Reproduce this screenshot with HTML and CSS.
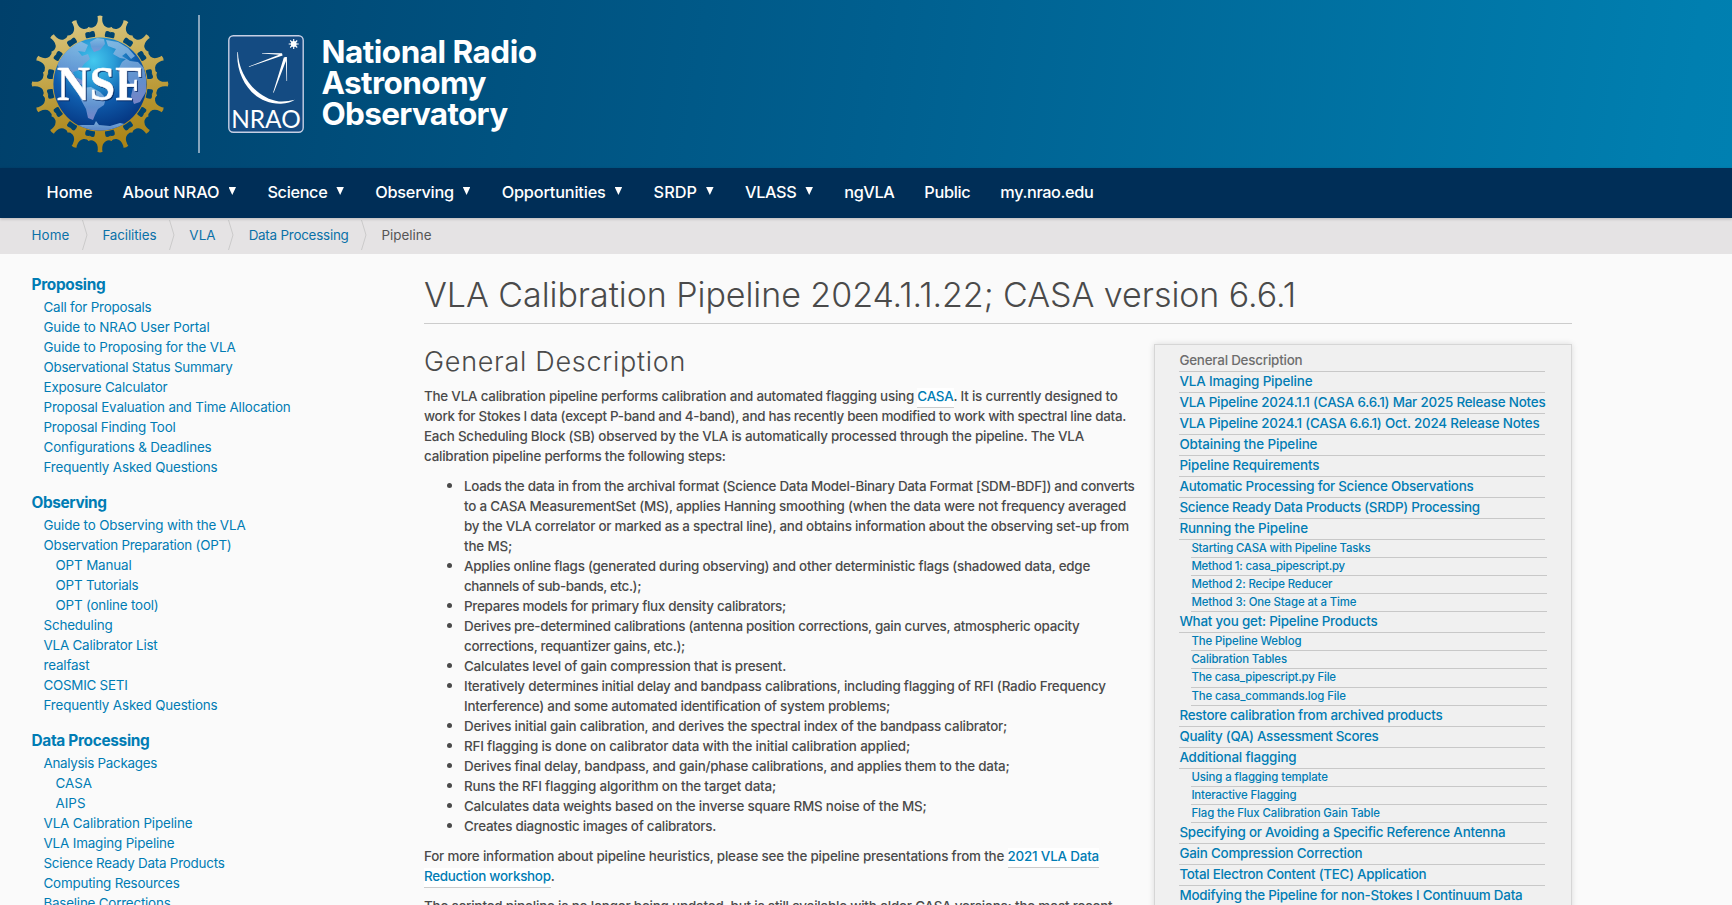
FILE: index.html
```html
<!DOCTYPE html>
<html lang="en">
<head>
<meta charset="utf-8">
<title>VLA Calibration Pipeline</title>
<link rel="stylesheet" href="styles.css">
</head>
<body>
<header class="masthead">
  <svg class="nsf" width="140" height="140" viewBox="-70 -70 140 140">
    <defs>
      <linearGradient id="gold" x1="0" y1="0" x2="0.15" y2="1">
        <stop offset="0" stop-color="#dccb8c"/><stop offset=".35" stop-color="#ccb25c"/><stop offset=".7" stop-color="#b79530"/><stop offset="1" stop-color="#ab8416"/>
      </linearGradient>
      <radialGradient id="sea" cx=".43" cy=".25" r=".72">
        <stop offset="0" stop-color="#44c8ee"/><stop offset=".3" stop-color="#2b9ed8"/><stop offset=".62" stop-color="#0f5cac"/><stop offset="1" stop-color="#063a86"/>
      </radialGradient>
      <linearGradient id="land" x1="0" y1="0" x2="0" y2="1">
        <stop offset="0" stop-color="#8fc0e6"/><stop offset=".6" stop-color="#6f9bd6"/><stop offset="1" stop-color="#8b8fd0"/>
      </linearGradient>
      <clipPath id="disc"><circle r="46.6"/></clipPath>
      <path id="tooth" d="M-2.600-67.800Q0-69 2.600-67.800L2.200-66Q1.800-59.500 5.800-57.200Q8.600-55.600 11.800-57L10.400-51.800Q6.600-54 5.600-52.200Q4.400-50 5.200-45.500L-5.200-45.500Q-4.400-50-5.600-52.200Q-6.600-54-10.400-51.800L-11.800-57Q-8.600-55.600-5.800-57.200Q-1.800-59.500-2.200-66Z"/>
      <mask id="gear" maskUnits="userSpaceOnUse" x="-70" y="-70" width="140" height="140">
        <g fill="#fff">
          <use href="#tooth"/><use href="#tooth" transform="rotate(22.5)"/><use href="#tooth" transform="rotate(45)"/><use href="#tooth" transform="rotate(67.5)"/>
          <use href="#tooth" transform="rotate(90)"/><use href="#tooth" transform="rotate(112.5)"/><use href="#tooth" transform="rotate(135)"/><use href="#tooth" transform="rotate(157.5)"/>
          <use href="#tooth" transform="rotate(180)"/><use href="#tooth" transform="rotate(202.5)"/><use href="#tooth" transform="rotate(225)"/><use href="#tooth" transform="rotate(247.5)"/>
          <use href="#tooth" transform="rotate(270)"/><use href="#tooth" transform="rotate(292.5)"/><use href="#tooth" transform="rotate(315)"/><use href="#tooth" transform="rotate(337.5)"/>
          <circle r="47.6"/>
        </g>
      </mask>
    </defs>
    <rect x="-70" y="-70" width="140" height="140" fill="url(#gold)" mask="url(#gear)"/>
    <circle r="46.6" fill="url(#sea)"/>
    <g clip-path="url(#disc)" fill="url(#land)" opacity=".85">
      <path d="M-44-22L-33-38L-20-43L-12-39L-15-32L-22-33L-18-28L-12-30L-10-25L-16-20L-20-14L-27-12L-25-7L-18-4L-14 2L-20 0L-29-6L-36-6L-40-14Z"/>
      <path d="M-10-42L-3-46L4-45L5-40L0-34L-6-32L-9-37Z"/>
      <path d="M6-44L18-42L28-36L35-28L31-25L26-31L22-28L30-23L38-22L44-16L46-6L46 8L40 18L34 20L31 12L33 4L28-4L20-6L18-14L22-22L26-25L20-26L13-30L16-35L8-38Z"/>
      <path d="M-19 4L-9 3L0 8L6 14L4 21L-2 25L-5 31L-7 36L-12 34L-14 25L-19 16L-22 9Z"/>
      <path d="M-34 43L-18 41L-6 41L-4 37L-1 41L10 42L20 39L34 42L20 50L-20 50Z"/>
    </g>
    <text x="-43" y="15.5" class="nsf-word" textLength="86" lengthAdjust="spacingAndGlyphs">NSF</text>
  </svg>
  <span class="rule"></span>
  <svg class="nrao" width="76" height="98" viewBox="228 35 76 98">
    <rect x="228.8" y="35.8" width="74.4" height="96.4" rx="4.5" fill="#144b82" stroke="#c6cfe4" stroke-width="1.4"/>
    <path fill="#fff" d="M237.4 52C235.5 76 252 104.5 281 103.8Q290 103.2 294.8 99.8Q287 102 279 101.5C257 98.5 238.5 76 237.9 52Z"/>
    <path fill="#fff" d="M262 52.9L282 53.2L282.6 55.4L249 67L248.8 66.5L279 54.7L262 53.5ZM285.5 57L286.9 57L287.1 81L286.5 81L285.9 61L273.7 92.7L273.1 92.5L283.8 57.5Z"/>
    <path stroke="#fff" stroke-width="1.1" d="M293.7 39V49M288.7 44H298.7M290.2 40.5L297.2 47.5M297.2 40.5L290.2 47.5"/>
    <circle cx="293.7" cy="44" r="2.9" fill="#fff"/>
    <text x="231.2" y="128" class="nrao-word" textLength="69.5" lengthAdjust="spacingAndGlyphs">NRAO</text>
  </svg>
  <div class="wordmark"><span data-w="215">National Radio</span><span data-w="164.5">Astronomy</span><span data-w="186">Observatory</span></div>
</header>
<nav class="mainnav">
  <a><span data-w="46">Home</span></a>
  <a class="drop"><span data-w="97">About NRAO</span></a>
  <a class="drop"><span data-w="60">Science</span></a>
  <a class="drop"><span data-w="78.5">Observing</span></a>
  <a class="drop"><span data-w="104">Opportunities</span></a>
  <a class="drop"><span data-w="43.5">SRDP</span></a>
  <a class="drop"><span data-w="51.5">VLASS</span></a>
  <a><span data-w="50">ngVLA</span></a>
  <a><span data-w="46">Public</span></a>
  <a><span data-w="93">my.nrao.edu</span></a>
</nav>
<div class="crumbs">
  <a><span data-w="38">Home</span></a><svg width="6" height="30"><path d="M.5 0L5 15L.5 30"/></svg>
  <a><span data-w="54">Facilities</span></a><svg width="6" height="30"><path d="M.5 0L5 15L.5 30"/></svg>
  <a><span data-w="26.5">VLA</span></a><svg width="6" height="30"><path d="M.5 0L5 15L.5 30"/></svg>
  <a><span data-w="100">Data Processing</span></a><svg width="6" height="30"><path d="M.5 0L5 15L.5 30"/></svg>
  <b><span data-w="50">Pipeline</span></b>
</div>
<div class="page">
  <aside class="side">
    <h4><span data-w="74">Proposing</span></h4>
    <ul>
      <li><span data-w="108">Call for Proposals</span></li>
      <li><span data-w="166">Guide to NRAO User Portal</span></li>
      <li><span data-w="192">Guide to Proposing for the VLA</span></li>
      <li><span data-w="189">Observational Status Summary</span></li>
      <li><span data-w="124">Exposure Calculator</span></li>
      <li><span data-w="247">Proposal Evaluation and Time Allocation</span></li>
      <li><span data-w="132">Proposal Finding Tool</span></li>
      <li><span data-w="168">Configurations &amp; Deadlines</span></li>
      <li><span data-w="174">Frequently Asked Questions</span></li>
    </ul>
    <h4><span data-w="75">Observing</span></h4>
    <ul>
      <li><span data-w="202">Guide to Observing with the VLA</span></li>
      <li><span data-w="188">Observation Preparation (OPT)</span></li>
      <li class="deep"><span data-w="76">OPT Manual</span></li>
      <li class="deep"><span data-w="83">OPT Tutorials</span></li>
      <li class="deep"><span data-w="103">OPT (online tool)</span></li>
      <li><span data-w="69">Scheduling</span></li>
      <li><span data-w="114">VLA Calibrator List</span></li>
      <li><span data-w="46">realfast</span></li>
      <li><span data-w="84">COSMIC SETI</span></li>
      <li><span data-w="174">Frequently Asked Questions</span></li>
    </ul>
    <h4><span data-w="118">Data Processing</span></h4>
    <ul>
      <li><span data-w="113.5">Analysis Packages</span></li>
      <li class="deep"><span data-w="36.5">CASA</span></li>
      <li class="deep"><span data-w="30">AIPS</span></li>
      <li><span data-w="149">VLA Calibration Pipeline</span></li>
      <li><span data-w="131">VLA Imaging Pipeline</span></li>
      <li><span data-w="181">Science Ready Data Products</span></li>
      <li><span data-w="136">Computing Resources</span></li>
      <li><span data-w="127">Baseline Corrections</span></li>
    </ul>
  </aside>
  <main class="main">
    <h1><span data-w="872">VLA Calibration Pipeline 2024.1.1.22; CASA version 6.6.1</span></h1>
    <div class="cols">
      <article class="copy">
        <h2><span data-w="262">General Description</span></h2>
        <p><span data-w="693.5">The VLA calibration pipeline performs calibration and automated flagging using <a>CASA</a>. It is currently designed to</span><br>
        <span data-w="702">work for Stokes I data (except P-band and 4-band), and has recently been modified to work with spectral line data.</span><br>
        <span data-w="660">Each Scheduling Block (SB) observed by the VLA is automatically processed through the pipeline. The VLA</span><br>
        <span data-w="301.5">calibration pipeline performs the following steps:</span></p>
        <ul>
          <li><span data-w="670.5">Loads the data in from the archival format (Science Data Model-Binary Data Format [SDM-BDF]) and converts</span><br>
          <span data-w="662">to a CASA MeasurementSet (MS), applies Hanning smoothing (when the data were not frequency averaged</span><br>
          <span data-w="665">by the VLA correlator or marked as a spectral line), and obtains information about the observing set-up from</span><br>
          <span data-w="48">the MS;</span></li>
          <li><span data-w="626">Applies online flags (generated during observing) and other deterministic flags (shadowed data, edge</span><br>
          <span data-w="177">channels of sub-bands, etc.);</span></li>
          <li><span data-w="322">Prepares models for primary flux density calibrators;</span></li>
          <li><span data-w="615.5">Derives pre-determined calibrations (antenna position corrections, gain curves, atmospheric opacity</span><br>
          <span data-w="221">corrections, requantizer gains, etc.);</span></li>
          <li><span data-w="322">Calculates level of gain compression that is present.</span></li>
          <li><span data-w="641.5">Iteratively determines initial delay and bandpass calibrations, including flagging of RFI (Radio Frequency</span><br>
          <span data-w="426">Interference) and some automated identification of system problems;</span></li>
          <li><span data-w="543">Derives initial gain calibration, and derives the spectral index of the bandpass calibrator;</span></li>
          <li><span data-w="446">RFI flagging is done on calibrator data with the initial calibration applied;</span></li>
          <li><span data-w="545.5">Derives final delay, bandpass, and gain/phase calibrations, and applies them to the data;</span></li>
          <li><span data-w="312">Runs the RFI flagging algorithm on the target data;</span></li>
          <li><span data-w="462.5">Calculates data weights based on the inverse square RMS noise of the MS;</span></li>
          <li><span data-w="252">Creates diagnostic images of calibrators.</span></li>
        </ul>
        <p><span data-w="675">For more information about pipeline heuristics, please see the pipeline presentations from the <a>2021 VLA Data</a></span><br>
        <span data-w="130.5"><a>Reduction workshop</a>.</span></p>
        <p><span data-w="688.5">The scripted pipeline is no longer being updated, but is still available with older CASA versions; the most recent</span></p>
      </article>
      <div class="toc">
        <ul>
          <li class="here"><span data-w="123">General Description</span></li>
          <li><span data-w="133">VLA Imaging Pipeline</span></li>
          <li><span data-w="366">VLA Pipeline 2024.1.1 (CASA 6.6.1) Mar 2025 Release Notes</span></li>
          <li><span data-w="360">VLA Pipeline 2024.1 (CASA 6.6.1) Oct. 2024 Release Notes</span></li>
          <li><span data-w="138">Obtaining the Pipeline</span></li>
          <li><span data-w="140">Pipeline Requirements</span></li>
          <li><span data-w="294">Automatic Processing for Science Observations</span></li>
          <li><span data-w="300.5">Science Ready Data Products (SRDP) Processing</span></li>
          <li><span data-w="128.5">Running the Pipeline</span></li>
          <li class="sub"><span data-w="179">Starting CASA with Pipeline Tasks</span></li>
          <li class="sub"><span data-w="153.5">Method 1: casa_pipescript.py</span></li>
          <li class="sub"><span data-w="141">Method 2: Recipe Reducer</span></li>
          <li class="sub"><span data-w="165">Method 3: One Stage at a Time</span></li>
          <li><span data-w="198">What you get: Pipeline Products</span></li>
          <li class="sub"><span data-w="110">The Pipeline Weblog</span></li>
          <li class="sub"><span data-w="95.5">Calibration Tables</span></li>
          <li class="sub"><span data-w="144.5">The casa_pipescript.py File</span></li>
          <li class="sub"><span data-w="154.5">The casa_commands.log File</span></li>
          <li><span data-w="263">Restore calibration from archived products</span></li>
          <li><span data-w="199">Quality (QA) Assessment Scores</span></li>
          <li><span data-w="117">Additional flagging</span></li>
          <li class="sub"><span data-w="136.5">Using a flagging template</span></li>
          <li class="sub"><span data-w="105">Interactive Flagging</span></li>
          <li class="sub"><span data-w="188.5">Flag the Flux Calibration Gain Table</span></li>
          <li><span data-w="326">Specifying or Avoiding a Specific Reference Antenna</span></li>
          <li><span data-w="183">Gain Compression Correction</span></li>
          <li><span data-w="247">Total Electron Content (TEC) Application</span></li>
          <li><span data-w="343">Modifying the Pipeline for non-Stokes I Continuum Data</span></li>
        </ul>
      </div>
    </div>
  </main>
</div>
<script src="tracking.js"></script>
</body>
</html>
```

FILE: styles.css
```css
* { box-sizing: border-box; }
html, body { height: 100%; overflow: hidden; }
body {
  margin: 0;
  background: #fafafa;
  color: #4a4a4a;
  font: 500 13.4px/20px Inter, Roboto, sans-serif;
}
ul { list-style: none; margin: 0; padding: 0; }
h1, h2, h4, p { margin: 0; }
[data-w] { display: inline-block; white-space: nowrap; }

.masthead {
  display: flex;
  align-items: flex-start;
  height: 168px;
  padding-left: 30px;
  background: linear-gradient(98deg, #00406b 0%, #005f8f 50%, #007fb0 97%, #0080b1 100%);
}
.nsf { margin-top: 14px; }
.nsf-word {
  fill: #fff;
  stroke: #fff;
  stroke-width: .5px;
  font: 700 47.5px "Liberation Serif", serif;
  filter: drop-shadow(1px 1.5px .6px rgba(8, 36, 90, .8));
}
.nrao-word { fill: #fff; font: 400 25.5px Lato, sans-serif; }
.rule { width: 2px; height: 138px; margin: 15px 0 0 28px; background: #86a5bd; }
.nrao { margin: 35px 0 0 28px; }
.wordmark {
  display: flex;
  flex-direction: column;
  align-items: flex-start;
  margin: 37px 0 0 17.5px;
  color: #fff;
  font-size: 31.5px;
  font-weight: 700;
  line-height: 30.8px;
}

.mainnav {
  position: relative;
  display: flex;
  height: 50px;
  padding: 14px 0 0 31.5px;
  background: #002e57;
  box-shadow: 0 1px 3px rgba(0, 0, 0, .2);
  color: #fff;
  font-size: 16.3px;
}
.mainnav a { padding: 0 15px; }
.drop { display: flex; }
.drop::after {
  content: "";
  width: 7.5px;
  height: 8px;
  margin: 5px 1.4px 0 9px;
  background: #fff;
  clip-path: polygon(0 0, 100% 0, 50% 100%);
}

.crumbs {
  display: flex;
  height: 36px;
  padding: 2px 0 0 31.5px;
  background: #e5e3e4;
  color: #0a71a8;
  font-weight: 400;
  line-height: 30px;
}
.crumbs svg { margin: 0 14.2px 0 12.7px; fill: none; stroke: #cbcaca; }
.crumbs b { color: #555; font-weight: 400; }

.page { display: flex; }
.side { width: 424px; padding: 21px 0 0 31.5px; color: #007cb4; font-weight: 400; }
.side h4 { height: 22px; font-size: 15.4px; font-weight: 700; }
.side ul { margin-bottom: 16px; padding-left: 12px; }
.side .deep { padding-left: 12px; }

.main { width: 1148px; padding-top: 21px; }
.main h1 {
  height: 49px;
  border-bottom: 1px solid #ccc;
  font-size: 34px;
  font-weight: 300;
  line-height: 40px;
}
.cols { display: flex; justify-content: space-between; padding-top: 20px; }
.copy { width: 712px; padding-top: 2px; }
.copy h2 { height: 40px; font-size: 27px; font-weight: 300; line-height: 32px; }
.copy p { margin-bottom: 10px; }
.copy a { padding-bottom: 3px; border-bottom: 1px solid #ccc; background: #fff; color: #007cb4; }
.copy ul { margin-bottom: 10px; padding-left: 40px; }
.copy li { display: flow-root; position: relative; }
.copy li::before {
  content: "";
  position: absolute;
  left: -17px;
  top: 7px;
  width: 5px;
  height: 5px;
  border-radius: 50%;
  background: #4a4a4a;
}

.toc {
  width: 418px;
  height: 600px;
  padding: 6px 25px 0 24px;
  border: 1px solid #d6d6d6;
  background: #f0f0f0;
  box-shadow: 0 0 6px rgba(0, 0, 0, .13);
  color: #007cb4;
}
.toc ul { margin-top: -.1px; }
.toc li { width: 366px; height: 21px; padding-left: .4px; border-bottom: 1px solid #c8c8c8; line-height: 19px; }
.toc .here { color: #6d6d6d; }
.toc .sub { width: 356px; height: 18.1px; margin-left: 12px; font-size: 11.4px; line-height: 16px; }
```

FILE: tracking.js
```js
// Tracks each line of type so that it sets to its measure.
document.querySelectorAll('[data-w]').forEach(function (el) {
  var want = parseFloat(el.dataset.w);
  var have = el.getBoundingClientRect().width;
  var space = (want - have) / el.textContent.length;
  el.style.letterSpacing = space.toFixed(3) + 'px';
});
```
